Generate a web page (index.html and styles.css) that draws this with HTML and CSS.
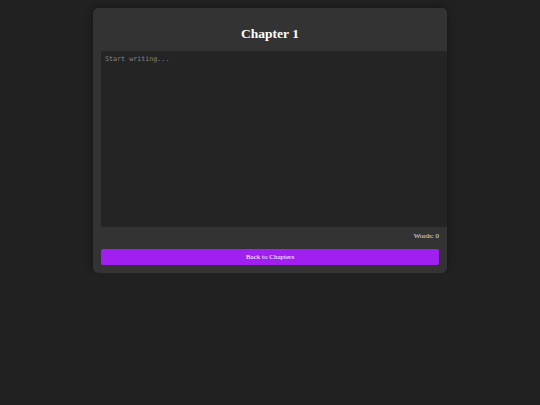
FILE: index.html
```html
<!DOCTYPE html>
<html>
<head>
<meta charset="utf-8">
<link rel="stylesheet" href="styles.css">
</head>
<body>
<div class="card">
  <h2 class="title">Chapter 1</h2>
  <textarea class="editor" placeholder="Start writing..."></textarea>
  <div class="words">Words: 0</div>
  <button class="back">Back to Chapters</button>
</div>
</body>
</html>
```
FILE: styles.css
```css
html, body {
  margin: 0;
  background: #212121;
}
body {
  font-family: "Liberation Serif", "Times New Roman", serif;
  color: #fff;
}
.card {
  width: 338px;
  margin: 8px auto 0;
  padding: 8px;
  background: #333333;
  border-radius: 5px;
  box-shadow: 0 0 8px rgba(0,0,0,0.35);
}
.title {
  margin: 10px 0 9px;
  font-size: 13.5px;
  line-height: 16px;
  text-align: center;
  font-weight: bold;
}
.editor {
  display: block;
  width: 338px;
  height: 169px;
  padding: 3px 4px 4px;
  margin: 0;
  border: 0;
  border-radius: 2px;
  background: #242424;
  color: #ddd;
  font-family: "DejaVu Sans Mono", monospace;
  font-size: 6.7px;
  line-height: 10px;
  resize: none;
  outline: none;
}
.editor::placeholder {
  color: #858585;
}
.words {
  margin: 5px 0 9px;
  font-size: 7px;
  line-height: 8px;
  text-align: right;
  color: #e0e0e0;
  font-weight: normal;
}
.back {
  display: block;
  width: 100%;
  height: 16px;
  padding: 0;
  border: 0;
  border-radius: 2px;
  background: #a020f0;
  color: #fff;
  font-family: "Liberation Serif", "Times New Roman", serif;
  font-size: 7px;
  font-weight: normal;
}
```
